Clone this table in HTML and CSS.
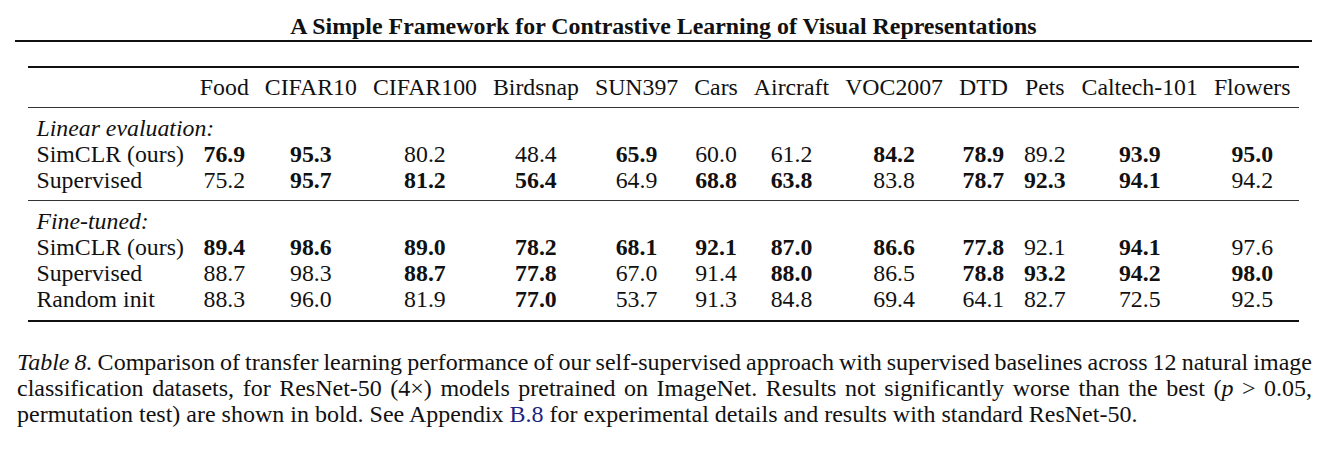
FILE: index.html
```html
<!DOCTYPE html>
<html>
<head>
<meta charset="utf-8">
<link rel="stylesheet" href="styles.css">
</head>
<body>
<div class="page">
  <header class="running-head">A Simple Framework for Contrastive Learning of Visual Representations</header>
  <table class="results">
    <thead>
      <tr>
        <th class="label"></th>
        <th>Food</th><th>CIFAR10</th><th>CIFAR100</th><th>Birdsnap</th><th>SUN397</th><th>Cars</th><th>Aircraft</th><th>VOC2007</th><th>DTD</th><th>Pets</th><th>Caltech-101</th><th>Flowers</th>
      </tr>
    </thead>
    <tbody class="group first-group">
      <tr class="section-title"><td colspan="13">Linear evaluation:</td></tr>
      <tr>
        <td class="label">SimCLR (ours)</td>
        <td><b>76.9</b></td><td><b>95.3</b></td><td>80.2</td><td>48.4</td><td><b>65.9</b></td><td>60.0</td><td>61.2</td><td><b>84.2</b></td><td><b>78.9</b></td><td>89.2</td><td><b>93.9</b></td><td><b>95.0</b></td>
      </tr>
      <tr class="last">
        <td class="label">Supervised</td>
        <td>75.2</td><td><b>95.7</b></td><td><b>81.2</b></td><td><b>56.4</b></td><td>64.9</td><td><b>68.8</b></td><td><b>63.8</b></td><td>83.8</td><td><b>78.7</b></td><td><b>92.3</b></td><td><b>94.1</b></td><td>94.2</td>
      </tr>
    </tbody>
    <tbody class="group second-group">
      <tr class="section-title"><td colspan="13">Fine-tuned:</td></tr>
      <tr>
        <td class="label">SimCLR (ours)</td>
        <td><b>89.4</b></td><td><b>98.6</b></td><td><b>89.0</b></td><td><b>78.2</b></td><td><b>68.1</b></td><td><b>92.1</b></td><td><b>87.0</b></td><td><b>86.6</b></td><td><b>77.8</b></td><td>92.1</td><td><b>94.1</b></td><td>97.6</td>
      </tr>
      <tr>
        <td class="label">Supervised</td>
        <td>88.7</td><td>98.3</td><td><b>88.7</b></td><td><b>77.8</b></td><td>67.0</td><td>91.4</td><td><b>88.0</b></td><td>86.5</td><td><b>78.8</b></td><td><b>93.2</b></td><td><b>94.2</b></td><td><b>98.0</b></td>
      </tr>
      <tr class="last">
        <td class="label">Random init</td>
        <td>88.3</td><td>96.0</td><td>81.9</td><td><b>77.0</b></td><td>53.7</td><td>91.3</td><td>84.8</td><td>69.4</td><td>64.1</td><td>82.7</td><td>72.5</td><td>92.5</td>
      </tr>
    </tbody>
  </table>
  <p class="caption">
    <span class="cap-line full"><i>Table 8.</i> Comparison of transfer learning performance of our self-supervised approach with supervised baselines across 12 natural image</span>
    <span class="cap-line full">classification datasets, for ResNet-50 (4×) models pretrained on ImageNet. Results not significantly worse than the best (<i>p</i>&nbsp;&gt;&nbsp;0.05,</span>
    <span class="cap-line">permutation test) are shown in bold. See Appendix <a class="ref" href="#">B.8</a> for experimental details and results with standard ResNet-50.</span>
  </p>
</div>
</body>
</html>
```

FILE: styles.css
```css
html, body {
  margin: 0;
  padding: 0;
  background: #ffffff;
}

body {
  font-family: "Liberation Serif", "Times New Roman", serif;
  color: #111;
}

.page {
  width: 1299px;
  margin-left: 13px;
}

.running-head {
  padding-top: 12px;
  font-size: 23.9px;
  line-height: 28px;
  font-weight: bold;
  text-align: center;
  border-bottom: 2px solid #111;
  margin-left: 2px;
}

.results {
  border-collapse: collapse;
  margin: 24px auto 0;
  font-size: 23.8px;
  line-height: 26px;
  border-top: 2px solid #111;
  border-bottom: 2px solid #111;
  position: relative;
  left: 1px;
}

.results th,
.results td {
  padding: 0 8px;
  text-align: center;
  white-space: nowrap;
  font-weight: normal;
}

.results b {
  font-weight: bold;
}

.results th.label,
.results td.label {
  text-align: left;
}

.results thead th {
  padding-top: 6px;
  padding-bottom: 7px;
  border-bottom: 1px solid #333;
}

.results .section-title td {
  text-align: left;
  font-style: italic;
  padding-top: 7px;
}

.results tr.last td {
  padding-bottom: 7px;
}

.results .second-group {
  border-top: 1px solid #333;
}

.results .second-group tr.last td {
  padding-bottom: 8px;
}

.caption {
  margin: 27px 0 0 4px;
  font-size: 24px;
  line-height: 26px;
}

.cap-line {
  display: block;
  white-space: nowrap;
  text-align: left;
}

.cap-line.full {
  word-spacing: -1.5px;
  text-align: justify;
  text-align-last: justify;
}

.ref {
  color: #1c2580;
  text-decoration: none;
}
```
